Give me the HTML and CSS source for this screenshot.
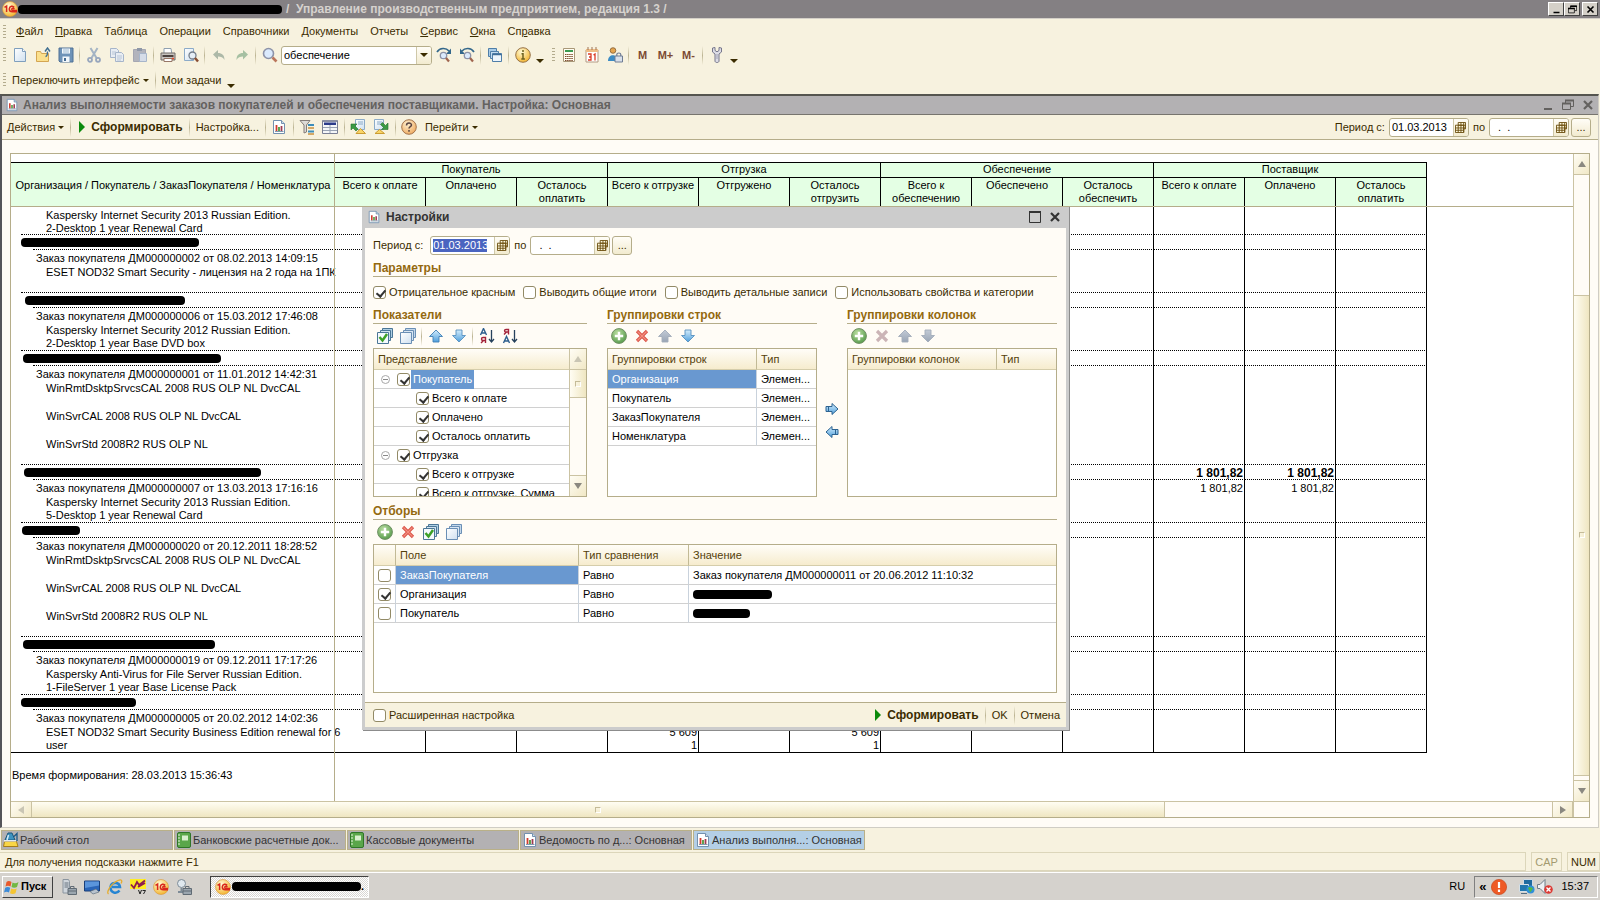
FILE: index.html
```html
<!DOCTYPE html>
<html lang="ru">
<head>
<meta charset="utf-8">
<title>Управление производственным предприятием</title>
<link rel="stylesheet" href="styles.css">
</head>
<body>
<svg class="defs" aria-hidden="true">
  <defs>
    <linearGradient id="gBlue" x1="0" y1="0" x2="0" y2="1"><stop offset="0" stop-color="#d4edfc"/><stop offset="1" stop-color="#4f9fdc"/></linearGradient>
    <linearGradient id="gGrey" x1="0" y1="0" x2="0" y2="1"><stop offset="0" stop-color="#c3cbd6"/><stop offset="1" stop-color="#99a5b5"/></linearGradient>
    <linearGradient id="gDoc" x1="0" y1="0" x2="1" y2="1"><stop offset="0" stop-color="#fff"/><stop offset="1" stop-color="#cfe0f0"/></linearGradient>
    <radialGradient id="gGreen" cx=".4" cy=".3" r=".8"><stop offset="0" stop-color="#b9dc9f"/><stop offset="1" stop-color="#4e9645"/></radialGradient>
    <radialGradient id="gOrange" cx=".4" cy=".3" r=".8"><stop offset="0" stop-color="#fff0cf"/><stop offset="1" stop-color="#eda456"/></radialGradient>
    <radialGradient id="gYellow" cx=".4" cy=".3" r=".8"><stop offset="0" stop-color="#fffbd8"/><stop offset="1" stop-color="#f2ad1c"/></radialGradient>
  </defs>
  <symbol id="one" viewBox="0 0 16 16"><circle cx="8" cy="8" r="7.5" fill="url(#gYellow)" stroke="#d8953a" stroke-width=".6"/><path d="M2.5 6.3 4.6 5v6M12.2 6.4C11 4.3 7.3 4.9 7.3 8c0 2.2 1.5 2.8 3 2.8H15M12.4 8.2c-1.200-1.400-2.600-.9-2.600.2 0 .8.6 1 1.200 1h4" fill="none" stroke="#d9281c" stroke-width="1.500"/></symbol>
  <symbol id="new" viewBox="0 0 16 16"><path d="M2.500 1.500h8l3 3v10h-11z" fill="url(#gDoc)" stroke="#7f9fbd"/><path d="M10.500 1.500v3h3" fill="#fff" stroke="#7f9fbd"/></symbol>
  <symbol id="open" viewBox="0 0 16 16"><path d="M1.500 14.500v-10h4l1 2h7v8z" fill="#fbe08d" stroke="#d3a552"/><path d="M10.500 9.500c2 0 2-2 2-5M10 4.500 12.500 1 15 4.500" fill="none" stroke="#3d6d8f" stroke-width="1.400"/></symbol>
  <symbol id="save" viewBox="0 0 16 16"><path d="M1 1h14v14H2l-1-1z" fill="#6e93b8" stroke="#4e7195"/><path d="M4 1.500h8v5H4zM4.500 9.500h7V15h-7z" fill="#f2f7fb"/><path d="M5 3h6M5 5h6" stroke="#9db9d1"/><path d="M6 11h2v3H6z" fill="#456a90"/></symbol>
  <symbol id="cut" viewBox="0 0 16 16"><path d="M4.500 1 10.500 11M11.500 1l-6 10" stroke="#a4b4c4" stroke-width="2"/><g fill="none" stroke="#97a6bd" stroke-width="1.800"><circle cx="4" cy="12.800" r="2"/><circle cx="12" cy="12.800" r="2"/></g></symbol>
  <symbol id="copy" viewBox="0 0 16 16"><g fill="#e8edf3" stroke="#a6b5ca"><path d="M1.500 1.500h6l2 2v7h-8z"/><path d="M6.500 5.500h6l2 2v7h-8z"/></g><path d="M3 5h4M8 9h5M8 11h5M8 13h4M3 7h3" stroke="#b8c5d6"/></symbol>
  <symbol id="paste" viewBox="0 0 16 16"><path d="M1.500 2.500h12v12h-12z" fill="#b2b4bd" stroke="#a5a7b2"/><path d="M5 1h5v3H5z" fill="#8f98a8"/><path d="M7.500 6.500h7v8h-7z" fill="#d5dce8" stroke="#a6b5ca"/></symbol>
  <symbol id="print" viewBox="0 0 16 16"><path d="M4 1.500h7l1 6H4z" fill="#fff" stroke="#8fa0b0"/><path d="M1 6h14v7H1z" fill="#c7c4c0" stroke="#706a66"/><path d="M2.500 8h11v2h-11z" fill="#4c4340"/><path d="M4 11.500h8v3H4z" fill="#fff" stroke="#977767"/><path d="M12 11.500h2" stroke="#e24a2c" stroke-width="1.500"/></symbol>
  <symbol id="preview" viewBox="0 0 16 16"><path d="M1.500 1.500h9v12h-9z" fill="url(#gDoc)" stroke="#8cabc8"/><circle cx="9.500" cy="8.500" r="3.500" fill="#e5eef6" stroke="#737d8a" stroke-width="1.300"/><path d="m12 11 3 3.500" stroke="#894e32" stroke-width="2.400"/></symbol>
  <symbol id="undo" viewBox="0 0 16 16"><path d="M2 7.500 7 3v3c4 0 6.500 2 6.500 7C12 10 10 9.500 7 9.500v3z" fill="#adb9a8"/></symbol>
  <symbol id="redo" viewBox="0 0 16 16"><path d="M14 7.500 9 3v3c-4 0-6.500 2-6.500 7C4 10 6 9.500 9 9.500v3z" fill="#a6c0a2"/></symbol>
  <symbol id="lens" viewBox="0 0 16 16"><circle cx="6.500" cy="6.500" r="5" fill="#dbeafd" stroke="#8d93a8" stroke-width="1.600"/><path d="m10.500 10.500 4 4" stroke="#bb765c" stroke-width="2.600"/></symbol>
  <symbol id="next" viewBox="0 0 16 16"><path d="M1 5c3-4.500 9-4.500 12-1" fill="none" stroke="#33678b" stroke-width="1.700"/><path d="M15 1.500V7h-5z" fill="#33678b"/><circle cx="7.500" cy="8.500" r="3.200" fill="#dbeafd" stroke="#8d93a8" stroke-width="1.300"/><path d="m10 11 3 3.500" stroke="#a0654f" stroke-width="2.200"/></symbol>
  <symbol id="prev" viewBox="0 0 16 16"><path d="M15 5C12 .5 6 .5 3 4" fill="none" stroke="#33678b" stroke-width="1.700"/><path d="M1 1.500V7h5z" fill="#33678b"/><circle cx="8.500" cy="8.500" r="3.200" fill="#dbeafd" stroke="#8d93a8" stroke-width="1.300"/><path d="m11 11 3 3.500" stroke="#a0654f" stroke-width="2.200"/></symbol>
  <symbol id="windows" viewBox="0 0 16 16"><g stroke="#4f7ea8"><path d="M1.500 1.500h8v8h-8z" fill="#a9cce8"/><path d="M3.500 4.500h8v7h-8z" fill="#c3dcf0"/><path d="M5.500 6.500h9v8h-9z" fill="#edf5fc"/></g><path d="M5.500 7.500h9" stroke="#3d6d98" stroke-width="1.500"/></symbol>
  <symbol id="info" viewBox="0 0 16 16"><circle cx="8" cy="8" r="7.300" fill="url(#gYellow)" stroke="#977349"/><path d="M8 3v2M6.500 6.800H8V12M6.300 12h3.600" fill="none" stroke="#6d611f" stroke-width="1.500"/></symbol>
  <symbol id="calc" viewBox="0 0 16 16"><path d="M2.500 1.500h11v13h-11z" fill="#fffdf2" stroke="#a99878"/><path d="M4 3h8v2H4z" fill="#3a9b52"/><path d="M4 7.500h8M4 9.500h8M4 11.500h8M4 13.500h8" stroke="#7c4a2c" stroke-width="1.200" stroke-dasharray="1.500 .6"/></symbol>
  <symbol id="cal" viewBox="0 0 16 16"><path d="M2 3h12v12H2z" fill="#fff" stroke="#b39a83"/><path d="M2 2h12v3H2z" fill="#efbd85"/><path d="M4 0v3M8 0v3M12 0v3" stroke="#9d7254"/><path d="M4 7h3v6H4M5 10h2M9.500 8 11 7v6.500" fill="none" stroke="#da3b24" stroke-width="1.300"/></symbol>
  <symbol id="userlock" viewBox="0 0 16 16"><circle cx="6" cy="3.500" r="2.800" fill="#e4a54f" stroke="#805a2f" stroke-width=".8"/><path d="M1 14c0-7 9-8 10 0z" fill="#3c8cc4"/><path d="M8 9h7.500v6H8z" fill="#d9e0ea" stroke="#6e7c94"/><path d="M9.800 9V7.500c0-2 4-2 4 0V9" fill="none" stroke="#6e7c94" stroke-width="1.200"/></symbol>
  <symbol id="wrench" viewBox="0 0 16 16"><path d="M3.500 1v4l2.500 2v7c0 2 4 2 4 0V7l2.500-2V1L10 .500v3L8 4.800 6 3.500v-3z" fill="#dddde6" stroke="#77778b"/><path d="M8 7v5" stroke="#a3a3b5"/></symbol>
  <symbol id="report" viewBox="0 0 14 16"><path d="M1.500 1.500h8l3 3v10h-11z" fill="#fff" stroke="#7391af"/><path d="M9.500 1.500v3h3" fill="#cdddec" stroke="#7391af"/><path d="M4.500 6v6" stroke="#d23b2e" stroke-width="1.800"/><path d="M7 8v4" stroke="#4c9b3e" stroke-width="1.800"/><path d="M9.500 7v5" stroke="#a03b50" stroke-width="1.800"/><path d="M3 12.500h8.500" stroke="#8099b0"/></symbol>
  <symbol id="filter" viewBox="0 0 16 16"><path d="M1 1.500h10L7.500 6v7L5 14V6z" fill="#dddad7" stroke="#857d79"/><path d="M9 6h6M9 12.500h6" stroke="#3c8dbb" stroke-width="2"/><path d="M9 9h6M9 15h6" stroke="#d5a865" stroke-width="2"/></symbol>
  <symbol id="form" viewBox="0 0 16 16"><path d="M.5 1.500h15v13H.5z" fill="#f4f6f8" stroke="#7a7f94"/><path d="M1 1h14v2H1z" fill="#8b90a3"/><path d="M2 3.500h12v2.500H2z" fill="#2c3b8a"/><path d="M1 8.500h14M1 11.500h14M8 6v8" stroke="#98a2b3"/></symbol>
  <symbol id="expin" viewBox="0 0 16 16"><path d="M5.500.5h9v10h-9z" fill="url(#gDoc)" stroke="#8cabc8"/><path d="M8 3h5M8 5h5" stroke="#8cabc8"/><path d="M1 11V5h6L5 7l3 3-2 2-3-3z" fill="#3b9a43" stroke="#27712e" stroke-width=".6"/><path d="m6 14.500 4.500-5 5 5z" fill="#f9d567" stroke="#cb9b32"/></symbol>
  <symbol id="expout" viewBox="0 0 16 16"><path d="M1.500.5h9v10h-9z" fill="url(#gDoc)" stroke="#8cabc8"/><path d="M4 3h5M4 5h4" stroke="#8cabc8"/><path d="M15 4v6.500H8.500l2-2-3-3 2-2 3 3z" fill="#3b9a43" stroke="#27712e" stroke-width=".6"/><path d="m2 14.500 4.500-4 5 4z" fill="#f9d567" stroke="#cb9b32"/></symbol>
  <symbol id="help" viewBox="0 0 16 16"><circle cx="8" cy="8" r="7.300" fill="url(#gOrange)" stroke="#a5744c"/><path d="M5.500 6.500C5.500 3.300 10.500 3.500 10.500 6c0 1.700-2.500 1.700-2.500 3.500M8 11v1.800" fill="none" stroke="#5a4542" stroke-width="1.500"/></symbol>
  <symbol id="grid" viewBox="0 0 12 12"><path d="M4 1h7v7H9v3H1V4h3z" fill="#fffbe0"/><path d="M3.500.500h8v7h-2M.500 3.500h9v8h-9zM3.500.500v11M6.500.500v11M9.500.500v11M.500 6.500h11M.500 9H9M3.500 3.500h8" fill="none" stroke="#6a4d0c"/></symbol>
  <symbol id="checkall" viewBox="0 0 16 16"><g stroke="#4b7696"><path d="M5.500.500h10v9h-10z" fill="#afcfe4"/><path d="M3.500 2.500h10v10h-10z" fill="#cfe2ef"/><path d="M.500 4.500h11v11H.500z" fill="#f4f9fd"/></g><path d="m2.500 9 3 3.500L10 6" fill="none" stroke="#3da027" stroke-width="2.500"/></symbol>
  <symbol id="uncheck" viewBox="0 0 16 16"><g stroke="#6a8fb5"><path d="M5.500.500h10v9h-10z" fill="#c3d7ea"/><path d="M3.500 2.500h10v10h-10z" fill="#d9e6f3"/><path d="M.500 4.500h11v11H.500z" fill="url(#gDoc)"/></g></symbol>
  <symbol id="up" viewBox="0 0 16 16"><path d="m8 2 6.500 6.500H11V14H5V8.500H1.500z" fill="url(#gBlue)" stroke="#3f7fb5" stroke-width=".9"/></symbol>
  <symbol id="down" viewBox="0 0 16 16"><path d="m8 14 6.500-6.500H11V2H5v5.500H1.500z" fill="url(#gBlue)" stroke="#5791bf" stroke-width=".9"/></symbol>
  <symbol id="upoff" viewBox="0 0 16 16"><path d="m8 2 6.500 6.500H11V14H5V8.500H1.500z" fill="url(#gGrey)" stroke="#a3adba" stroke-width=".9"/></symbol>
  <symbol id="downoff" viewBox="0 0 16 16"><path d="m8 14 6.500-6.500H11V2H5v5.500H1.500z" fill="url(#gGrey)" stroke="#a3adba" stroke-width=".9"/></symbol>
  <symbol id="right" viewBox="0 0 14 14"><path d="M1 4.500h6V1.500L13 7l-6 5.500v-3H1z" fill="url(#gBlue)" stroke="#2d6391"/><path d="M3.500 5v4" stroke="#2d6391"/></symbol>
  <symbol id="left" viewBox="0 0 14 14"><path d="M13 4.500H7V1.500L1 7l6 5.500v-3h6z" fill="url(#gBlue)" stroke="#2d6391"/><path d="M10.500 5v4" stroke="#2d6391"/></symbol>
  <symbol id="add" viewBox="0 0 16 16"><circle cx="8" cy="8" r="7.400" fill="url(#gGreen)" stroke="#6f8f63"/><path d="M8 3.800v8.400M3.800 8h8.400" stroke="#fff" stroke-width="2.400"/></symbol>
  <symbol id="del" viewBox="0 0 16 16"><path d="m3 3 10 10M13 3 3 13" stroke="#da5348" stroke-width="3.200"/><path d="m3.500 3.500 9 9M12.500 3.500l-9 9" stroke="#f38d7d" stroke-width="1.200"/></symbol>
  <symbol id="deloff" viewBox="0 0 16 16"><path d="m3 3 10 10M13 3 3 13" stroke="#cbb4b6" stroke-width="3.200"/></symbol>
  <symbol id="azdown" viewBox="0 0 16 16"><path d="M1.500 7 4.500.500 7.500 7M2.500 5h4" fill="none" stroke="#2d5e8d" stroke-width="1.400"/><path d="M6.500 15V9.500H4c-2 0-2 3 0 3h2.500M4.500 12.500 2 15" fill="none" stroke="#a3243a" stroke-width="1.400"/><path d="M12.500 2v11M10 11l2.500 3 2.500-3" fill="none" stroke="#26415c" stroke-width="1.300"/></symbol>
  <symbol id="zadown" viewBox="0 0 16 16"><path d="M6.500 6.500V1.500H4c-2 0-2 2.500 0 2.500h2.500M4.500 4 2 6.500" fill="none" stroke="#a3243a" stroke-width="1.400"/><path d="m1.500 15 3-6.500 3 6.500M2.500 13h4" fill="none" stroke="#2d5e8d" stroke-width="1.400"/><path d="M12.500 2v11M10 11l2.500 3 2.500-3" fill="none" stroke="#26415c" stroke-width="1.300"/></symbol>
  <symbol id="min" viewBox="0 0 12 12"><path d="M2 10h8" stroke="currentColor" stroke-width="2"/></symbol>
  <symbol id="restore" viewBox="0 0 12 12"><path d="M3.500 4V1.500h8v6H9M.500 4.500h8v6h-8z" fill="none" stroke="currentColor"/><path d="M3 1.500h9M0 4.500h9" stroke="currentColor" stroke-width="2"/></symbol>
  <symbol id="max" viewBox="0 0 12 12"><path d="M.500 1h11v10.500H.500z" fill="none" stroke="currentColor"/><path d="M0 1h12" stroke="currentColor" stroke-width="2"/></symbol>
  <symbol id="close" viewBox="0 0 12 12"><path d="m2 2 8 8M10 2l-8 8" stroke="currentColor" stroke-width="2.200"/></symbol>
  <symbol id="desk" viewBox="0 0 16 16"><path d="M5 1h4l3 7H2z" fill="#3e93c0" stroke="#1a567c"/><path d="M5.500 3 4 8" stroke="#d6ecf8" stroke-width="1.500"/><path d="M1.500 9.500h12l1.500 5H.500z" fill="#f9d645" stroke="#a57d1b"/><path d="M1 8.800h12" stroke="#e8f1f8" stroke-width="1.500"/><path d="M11 4.500 14 1.500V9" fill="none" stroke="#1b5887" stroke-width="1.300"/></symbol>
  <symbol id="book" viewBox="0 0 14 16"><rect x=".500" y=".500" width="13" height="15" rx="1.500" fill="#5aa64a" stroke="#2f7528"/><path d="M5 3.500h6v5H5z" fill="#d8efcd"/><path d="M1 3h2M1 6h2M1 9h2M1 12h2" stroke="#e8f5e2"/></symbol>
  <symbol id="flag" viewBox="0 0 16 16"><path d="M2.500 3C4 1.500 6 2 7.500 3L6.500 7.500C5 6.500 3 6.500 1.500 7.500z" fill="#e8592b"/><path d="M8.500 3.500c1.500 1 4 1 6-.5l-1.500 5c-1.500 1-4 1-5.500 0z" fill="#72b843"/><path d="M1.200 8.800c1.500-1 3.500-1 5 0L5 13.500c-1.500-1-3.500-1-5 0z" fill="#3c8bd8"/><path d="M7.200 9.500c1.500 1 4 1 5.500 0l-1.200 4.700c-1.500 1-4 1-5.500 0z" fill="#f5c532"/></symbol>
  <symbol id="server" viewBox="0 0 16 16"><path d="M2 .500h5.500l1 2V14H2z" fill="#cfd5db" stroke="#8a959f"/><path d="M3.500 4h4M3.500 6h4M3.500 8h4" stroke="#66727e"/><path d="M7 9.500h8.500v6H7z" fill="#9ba6af" stroke="#606b74"/><path d="M9.500 9V7.500h3.500V9M7 12h8.500" fill="none" stroke="#606b74"/></symbol>
  <symbol id="screen" viewBox="0 0 16 16"><path d="M.500 2h15v10H.500z" fill="#2a65b8" stroke="#1b3f78"/><path d="M1 2.500h14v4L1 9z" fill="#5b95dc"/><path d="M6 12.500 12 10l3 3-6 2z" fill="#b9c3ce" stroke="#60707f" stroke-width=".7"/></symbol>
  <symbol id="ie" viewBox="0 0 16 16"><path d="M12.500 11.500C9 16 3 13 3.500 8c.5-5.500 9-5.500 9.500 0H5" fill="none" stroke="#2685d2" stroke-width="2.500"/><path d="M1.500 15C-1 13 4 4.500 11 1.500c4-1.500 4.500.5 3 3" fill="none" stroke="#e7ad2c" stroke-width="1.300"/></symbol>
  <symbol id="v7" viewBox="0 0 16 16"><path d="M0 0h16v10H0z" fill="#ffed23"/><path d="M1 5.500 4 9l3-6 2 3 6-4.500M8 8l7-4" fill="none" stroke="#8f1c4e" stroke-width="1.800"/><path d="m8.500 11 1.500 4 1.500-4M12.500 11.500h3L13.500 15" fill="none" stroke="#222"/></symbol>
  <symbol id="tool" viewBox="0 0 16 16"><circle cx="5.500" cy="4.500" r="4" fill="#dfe8ee" stroke="#7d8b97"/><path d="M5.500 9v4M2 13h6" stroke="#7d8b97" stroke-width="2"/><path d="M7 9.500h8.500v6H7z" fill="#9ba6af" stroke="#606b74"/><path d="M9.500 9V7.500h3.500V9M7 12h8.500" fill="none" stroke="#606b74"/></symbol>
  <symbol id="alert" viewBox="0 0 16 16"><circle cx="8" cy="8" r="7.600" fill="#ee5a25" stroke="#c8481c" stroke-width=".7"/><path d="M8 3v6M8 10.500V13" stroke="#fff" stroke-width="2.200"/></symbol>
  <symbol id="net" viewBox="0 0 16 16"><path d="M4.500.500h9v7h-9z" fill="#1f6a9f" stroke="#cfdbe5"/><path d="M.500 5.500h9v7h-9z" fill="#2377ad" stroke="#d5e0e8"/><path d="M2 14.500h6" stroke="#536d82"/><circle cx="11.500" cy="10.500" r="4" fill="#2f8fd8"/><path d="M9 9c2-2 3 0 5 0-1 2-2 4-3 4z" fill="#52b847"/></symbol>
  <symbol id="mute" viewBox="0 0 16 16"><path d="M.500 5.500H3l5-5v14l-5-5H.500z" fill="#eef1f4" stroke="#6f7c88"/><circle cx="11.500" cy="10.500" r="4.300" fill="#dc3a34"/><path d="m9.500 8.500 4 4M13.500 8.500l-4 4" stroke="#fff" stroke-width="1.400"/></symbol>
</svg>

<header class="titlebar">
  <svg class="ico"><use href="#one"/></svg>
  <span class="redact title-redact"></span>
  <h1 class="title-text">/&nbsp; Управление производственным предприятием, редакция 1.3 /</h1>
  <span class="winbtns">
    <button class="winbtn" aria-label="Свернуть"><svg><use href="#min"/></svg></button>
    <button class="winbtn" aria-label="Восстановить"><svg><use href="#restore"/></svg></button>
    <button class="winbtn apart" aria-label="Закрыть"><svg><use href="#close"/></svg></button>
  </span>
</header>

<nav class="menubar">
  <i class="grip"></i>
  <button class="menu"><u>Ф</u>айл</button><button class="menu"><u>П</u>равка</button><button class="menu">Таблица</button><button class="menu">Операции</button><button class="menu">Справочники</button><button class="menu">Документы</button><button class="menu">Отчеты</button><button class="menu"><u>С</u>ервис</button><button class="menu"><u>О</u>кна</button><button class="menu">Сп<u>р</u>авка</button>
</nav>

<div class="toolbar">
  <i class="grip"></i>
  <button class="tb" aria-label="Создать"><svg class="ico"><use href="#new"/></svg></button>
  <button class="tb" aria-label="Открыть"><svg class="ico"><use href="#open"/></svg></button>
  <button class="tb" aria-label="Сохранить"><svg class="ico"><use href="#save"/></svg></button>
  <i class="sep"></i>
  <button class="tb" aria-label="Вырезать"><svg class="ico"><use href="#cut"/></svg></button>
  <button class="tb" aria-label="Копировать"><svg class="ico"><use href="#copy"/></svg></button>
  <button class="tb" aria-label="Вставить"><svg class="ico"><use href="#paste"/></svg></button>
  <i class="sep"></i>
  <button class="tb" aria-label="Печать"><svg class="ico"><use href="#print"/></svg></button>
  <button class="tb" aria-label="Просмотр"><svg class="ico"><use href="#preview"/></svg></button>
  <i class="sep"></i>
  <button class="tb" aria-label="Отменить"><svg class="ico"><use href="#undo"/></svg></button>
  <button class="tb" aria-label="Вернуть"><svg class="ico"><use href="#redo"/></svg></button>
  <i class="sep"></i>
  <button class="tb" aria-label="Найти"><svg class="ico"><use href="#lens"/></svg></button>
  <span class="field search"><input type="text" value="обеспечение" aria-label="Поиск"><button class="fieldbtn" aria-label="История поиска"><i class="caret"></i></button></span>
  <button class="tb" aria-label="Найти следующий"><svg class="ico"><use href="#next"/></svg></button>
  <button class="tb" aria-label="Найти предыдущий"><svg class="ico"><use href="#prev"/></svg></button>
  <i class="sep"></i>
  <button class="tb" aria-label="Окна"><svg class="ico"><use href="#windows"/></svg></button>
  <i class="sep"></i>
  <button class="tb" aria-label="Информация"><svg class="ico"><use href="#info"/></svg></button>
  <button class="more" aria-label="Еще"><i class="caret"></i></button>
  <i class="grip"></i>
  <button class="tb" aria-label="Калькулятор"><svg class="ico"><use href="#calc"/></svg></button>
  <button class="tb" aria-label="Календарь"><svg class="ico"><use href="#cal"/></svg></button>
  <button class="tb" aria-label="Пользователи"><svg class="ico"><use href="#userlock"/></svg></button>
  <i class="sep"></i>
  <button class="tb mem">M</button><button class="tb mem">M+</button><button class="tb mem">M-</button>
  <i class="sep"></i>
  <button class="tb" aria-label="Параметры"><svg class="ico"><use href="#wrench"/></svg></button>
  <button class="more" aria-label="Еще"><i class="caret"></i></button>
</div>

<div class="toolbar second">
  <i class="grip"></i>
  <button class="cmd">Переключить интерфейс<i class="caret small"></i></button>
  <i class="sep"></i>
  <button class="cmd">Мои задачи</button>
  <button class="more" aria-label="Еще"><i class="caret"></i></button>
</div>

<main class="child">
  <div class="child-title">
    <svg class="ico doc"><use href="#report"/></svg>
    <h2>Анализ выполняемости заказов покупателей и обеспечения поставщиками. Настройка: Основная</h2>
    <span class="child-btns">
      <button aria-label="Свернуть"><svg><use href="#min"/></svg></button>
      <button aria-label="Восстановить"><svg><use href="#restore"/></svg></button>
      <button aria-label="Закрыть"><svg><use href="#close"/></svg></button>
    </span>
  </div>
  <div class="child-tools">
    <button class="cmd">Действия<i class="caret small"></i></button>
    <i class="sep"></i>
    <button class="cmd run"><i class="play"></i>Сформировать</button>
    <i class="sep"></i>
    <button class="cmd">Настройка...</button>
    <i class="sep"></i>
    <button class="tb" aria-label="Отчет"><svg class="ico"><use href="#report"/></svg></button>
    <i class="sep"></i>
    <button class="tb" aria-label="Отбор"><svg class="ico"><use href="#filter"/></svg></button>
    <button class="tb" aria-label="Форма"><svg class="ico"><use href="#form"/></svg></button>
    <i class="sep"></i>
    <button class="tb" aria-label="Загрузить"><svg class="ico"><use href="#expin"/></svg></button>
    <button class="tb" aria-label="Выгрузить"><svg class="ico"><use href="#expout"/></svg></button>
    <i class="sep"></i>
    <button class="tb" aria-label="Справка"><svg class="ico"><use href="#help"/></svg></button>
    <button class="cmd">Перейти<i class="caret small"></i></button>
    <span class="period push">
      <label for="from">Период с:</label>
      <span class="field date"><input id="from" type="text" value="01.03.2013"><button class="fieldbtn" aria-label="Календарь"><svg><use href="#grid"/></svg></button></span>
      <label for="to">по</label>
      <span class="field date"><input id="to" type="text" value="  .  ."><button class="fieldbtn" aria-label="Календарь"><svg><use href="#grid"/></svg></button></span>
      <button class="dots">...</button>
    </span>
  </div>

  <div class="child-body">
    <div class="sheet">
      <div class="view">
        <table class="report">
          <thead>
            <tr class="h1">
              <th rowspan="2" class="first">Организация / Покупатель / ЗаказПокупателя / Номенклатура</th>
              <th colspan="3">Покупатель</th><th colspan="3">Отгрузка</th><th colspan="3">Обеспечение</th><th colspan="3">Поставщик</th>
            </tr>
            <tr class="h2">
              <th>Всего к оплате</th><th>Оплачено</th><th>Осталось<br>оплатить</th>
              <th>Всего к отгрузке</th><th>Отгружено</th><th>Осталось<br>отгрузить</th>
              <th>Всего к<br>обеспечению</th><th>Обеспечено</th><th>Осталось<br>обеспечить</th>
              <th>Всего к оплате</th><th>Оплачено</th><th>Осталось<br>оплатить</th>
            </tr>
          </thead>
          <tbody id="rows"></tbody>
        </table>
        <p class="stamp">Время формирования: 28.03.2013 15:36:43</p>
      </div>
      <div class="vscroll">
        <button class="arrow" aria-label="Вверх"><i class="tri up"></i></button>
        <span class="track"></span><span class="thumb"></span><span class="gap"></span>
        <button class="arrow" aria-label="Вниз"><i class="tri down"></i></button>
      </div>
      <div class="hscroll">
        <button class="arrow" aria-label="Влево"><i class="tri left"></i></button>
        <span class="thumb"></span><span class="track"></span>
        <button class="arrow" aria-label="Вправо"><i class="tri right"></i></button>
      </div>
      <div class="corner"></div>
    </div>
  </div>
</main>

<nav class="tabs">
  <button class="tab"><svg class="ico"><use href="#desk"/></svg>Рабочий стол</button>
  <button class="tab"><svg class="ico"><use href="#book"/></svg>Банковские расчетные док...</button>
  <button class="tab"><svg class="ico"><use href="#book"/></svg>Кассовые документы</button>
  <button class="tab"><svg class="ico"><use href="#report"/></svg>Ведомость по д...: Основная</button>
  <button class="tab active"><svg class="ico"><use href="#report"/></svg>Анализ выполня...: Основная</button>
</nav>

<footer class="status">
  <span class="hint">Для получения подсказки нажмите F1</span>
  <span class="lamp off">CAP</span>
  <span class="lamp">NUM</span>
</footer>

<div class="taskbar">
  <button class="start"><svg class="ico"><use href="#flag"/></svg>Пуск</button>
  <span class="quick">
    <svg class="ico"><use href="#server"/></svg><svg class="ico"><use href="#screen"/></svg><svg class="ico"><use href="#ie"/></svg><svg class="ico"><use href="#v7"/></svg><svg class="ico"><use href="#one"/></svg><svg class="ico"><use href="#tool"/></svg>
  </span>
  <button class="task"><svg class="ico"><use href="#one"/></svg><span class="redact"></span>.</button>
  <span class="lang">RU</span>
  <span class="tray"><b>«</b><svg class="ico"><use href="#alert"/></svg><svg class="ico net"><use href="#net"/></svg><svg class="ico"><use href="#mute"/></svg><time>15:37</time></span>
</div>

<section class="dialog" role="dialog" aria-labelledby="dlg">
  <div class="dlg-title">
    <svg class="ico doc"><use href="#report"/></svg>
    <h2 id="dlg">Настройки</h2>
    <span class="child-btns">
      <button aria-label="Развернуть"><svg><use href="#max"/></svg></button>
      <button aria-label="Закрыть"><svg><use href="#close"/></svg></button>
    </span>
  </div>
  <div class="dlg-body">
    <div class="period">
      <label for="dfrom">Период с:</label>
      <span class="field date"><input id="dfrom" class="selected" type="text" value="01.03.2013"><button class="fieldbtn" aria-label="Календарь"><svg><use href="#grid"/></svg></button></span>
      <label for="dto">по</label>
      <span class="field date"><input id="dto" type="text" value="  .  ."><button class="fieldbtn" aria-label="Календарь"><svg><use href="#grid"/></svg></button></span>
      <button class="dots">...</button>
    </div>
    <h3>Параметры</h3>
    <div class="checks">
      <label class="chk"><input type="checkbox" checked>Отрицательное красным</label>
      <label class="chk"><input type="checkbox">Выводить общие итоги</label>
      <label class="chk"><input type="checkbox">Выводить детальные записи</label>
      <label class="chk"><input type="checkbox">Использовать свойства и категории</label>
    </div>
    <div class="columns">
      <div class="col">
        <h3>Показатели</h3>
        <div class="tools">
          <button class="tb" aria-label="Отметить все"><svg class="ico"><use href="#checkall"/></svg></button>
          <button class="tb" aria-label="Снять отметки"><svg class="ico"><use href="#uncheck"/></svg></button>
          <i class="sep"></i>
          <button class="tb" aria-label="Вверх"><svg class="ico"><use href="#up"/></svg></button>
          <button class="tb" aria-label="Вниз"><svg class="ico"><use href="#down"/></svg></button>
          <i class="sep"></i>
          <button class="tb" aria-label="По возрастанию"><svg class="ico"><use href="#azdown"/></svg></button>
          <button class="tb" aria-label="По убыванию"><svg class="ico"><use href="#zadown"/></svg></button>
        </div>
        <div class="box split">
          <div class="tree">
            <div class="head">Представление</div>
            <div class="node cur"><i class="minus"></i><label class="chk"><input type="checkbox" checked><span>Покупатель</span></label></div>
            <div class="node sub"><label class="chk"><input type="checkbox" checked>Всего к оплате</label></div>
            <div class="node sub"><label class="chk"><input type="checkbox" checked>Оплачено</label></div>
            <div class="node sub"><label class="chk"><input type="checkbox" checked>Осталось оплатить</label></div>
            <div class="node"><i class="minus"></i><label class="chk"><input type="checkbox" checked>Отгрузка</label></div>
            <div class="node sub"><label class="chk"><input type="checkbox" checked>Всего к отгрузке</label></div>
            <div class="node sub"><label class="chk"><input type="checkbox" checked>Всего к отгрузке, Сумма</label></div>
          </div>
          <div class="vscroll">
            <button class="arrow" aria-label="Вверх"><i class="tri up dim"></i></button>
            <span class="thumb short"></span><span class="track"></span>
            <button class="arrow" aria-label="Вниз"><i class="tri down"></i></button>
          </div>
        </div>
      </div>
      <div class="col rowset">
        <h3>Группировки строк</h3>
        <div class="tools">
          <button class="tb" aria-label="Добавить"><svg class="ico"><use href="#add"/></svg></button>
          <button class="tb" aria-label="Удалить"><svg class="ico"><use href="#del"/></svg></button>
          <button class="tb" aria-label="Вверх" disabled><svg class="ico"><use href="#upoff"/></svg></button>
          <button class="tb" aria-label="Вниз"><svg class="ico"><use href="#down"/></svg></button>
        </div>
        <div class="box">
          <table class="list">
            <thead><tr><th>Группировки строк</th><th class="kind">Тип</th></tr></thead>
            <tbody>
              <tr class="cur"><td>Организация</td><td>Элемен...</td></tr>
              <tr><td>Покупатель</td><td>Элемен...</td></tr>
              <tr><td>ЗаказПокупателя</td><td>Элемен...</td></tr>
              <tr><td>Номенклатура</td><td>Элемен...</td></tr>
            </tbody>
          </table>
        </div>
      </div>
      <div class="swap">
        <button class="tb" aria-label="Перенести в колонки"><svg><use href="#right"/></svg></button>
        <button class="tb" aria-label="Перенести в строки"><svg><use href="#left"/></svg></button>
      </div>
      <div class="col">
        <h3>Группировки колонок</h3>
        <div class="tools">
          <button class="tb" aria-label="Добавить"><svg class="ico"><use href="#add"/></svg></button>
          <button class="tb" aria-label="Удалить" disabled><svg class="ico"><use href="#deloff"/></svg></button>
          <button class="tb" aria-label="Вверх" disabled><svg class="ico"><use href="#upoff"/></svg></button>
          <button class="tb" aria-label="Вниз" disabled><svg class="ico"><use href="#downoff"/></svg></button>
        </div>
        <div class="box">
          <table class="list">
            <thead><tr><th>Группировки колонок</th><th class="kind">Тип</th></tr></thead>
          </table>
        </div>
      </div>
    </div>
    <h3 class="last">Отборы</h3>
    <div class="tools">
      <button class="tb" aria-label="Добавить"><svg class="ico"><use href="#add"/></svg></button>
      <button class="tb" aria-label="Удалить"><svg class="ico"><use href="#del"/></svg></button>
      <button class="tb" aria-label="Отметить все"><svg class="ico"><use href="#checkall"/></svg></button>
      <button class="tb" aria-label="Снять отметки"><svg class="ico"><use href="#uncheck"/></svg></button>
    </div>
    <div class="box">
      <table class="list filters">
        <thead><tr><th class="mark"></th><th class="name">Поле</th><th class="cmp">Тип сравнения</th><th>Значение</th></tr></thead>
        <tbody>
          <tr class="cur"><td class="mark"><input type="checkbox" aria-label="ЗаказПокупателя"></td><td>ЗаказПокупателя</td><td>Равно</td><td>Заказ покупателя ДМ000000011 от 20.06.2012 11:10:32</td></tr>
          <tr><td class="mark"><input type="checkbox" aria-label="Организация" checked></td><td>Организация</td><td>Равно</td><td><span class="redact" style="width:79px"></span></td></tr>
          <tr><td class="mark"><input type="checkbox" aria-label="Покупатель"></td><td>Покупатель</td><td>Равно</td><td><span class="redact" style="width:57px"></span></td></tr>
        </tbody>
      </table>
    </div>
  </div>
  <div class="dlg-foot">
    <label class="chk"><input type="checkbox">Расширенная настройка</label>
    <button class="cmd run push"><i class="play"></i>Сформировать</button>
    <i class="sep"></i>
    <button class="cmd">OK</button>
    <i class="sep"></i>
    <button class="cmd">Отмена</button>
  </div>
</section>
<script src="report.js"></script>
</body>
</html>
```

FILE: styles.css
```css
* { box-sizing: border-box; }
html, body { height: 100%; }
body {
  margin: 0;
  display: flex;
  flex-direction: column;
  overflow: hidden;
  background: #f7f2df;
  color: #3b2c00;
  font: 11px/13px "Liberation Sans", Arial, sans-serif;
}
h1, h2, h3, p { margin: 0; font-size: 11px; line-height: 13px; }
button, input { font: inherit; color: inherit; }
button { padding: 0; border: 0; background: none; white-space: nowrap; }
svg { display: block; width: 12px; height: 12px; }
.defs { position: absolute; width: 0; height: 0; }
.ico { width: 16px; height: 16px; flex: none; }
.ico.doc { width: 14px; height: 14px; }
.push { margin-left: auto; }
.redact { display: block; height: 9px; border-radius: 4px; background: #000; }

.titlebar {
  display: flex; align-items: center; flex: none;
  height: 19px; padding: 0 2px;
  background: #848083; color: #d6d2ce;
  border-bottom: 1px solid #d4d0c8;
}
.title-redact { width: 264px; }
.title-text { margin-left: 4px; font-size: 12px; }
.winbtns { display: flex; margin-left: auto; }
.winbtn {
  display: grid; place-items: center; width: 16px; height: 14px;
  background: #d4d0c8; color: #000;
  border: 1px solid; border-color: #fff #404040 #404040 #fff;
}
.winbtn svg { width: 9px; height: 9px; }
.apart { margin-left: 2px; }

.grip {
  width: 3px; height: 14px; flex: none; margin: 0 2px 0 3px;
  background: repeating-linear-gradient(#b3ab8d 0 1px, transparent 1px 3px);
}
.menubar { display: flex; align-items: center; flex: none; height: 25px; padding-left: 2px; }
.menubar .grip { margin-left: 1px; }
.menu { padding: 0 6px; }
.menu:first-of-type { padding-left: 8px; }
.toolbar { display: flex; align-items: center; flex: none; height: 22px; }
.toolbar.second { height: 28px; }
.tb { display: grid; place-items: center; width: 23px; height: 20px; flex: none; }
.mem { font-weight: bold; color: #7c4a33; }
.sep {
  width: 1px; height: 19px; flex: none; margin: 0 2px;
  background: linear-gradient(transparent, #bdb594 50%, transparent);
}
.caret { display: inline-block; border: 4px solid transparent; border-top-color: #3b2c00; border-bottom: 0; }
.caret.small { border-width: 3px; border-bottom: 0; margin-left: 3px; vertical-align: 2px; }
.more { display: flex; align-items: flex-end; width: 15px; height: 16px; padding-left: 2px; flex: none; }
.cmd { padding: 0 4px; }
.run { display: flex; align-items: center; font-weight: bold; font-size: 12px; }
.play { margin: 0 6px 0 2px; border: 6px solid transparent; border-left-color: #0b8a0b; border-right: 0; }

.field {
  display: flex; width: 80px; height: 19px; flex: none; overflow: hidden;
  background: #fff; border: 1px solid #b5ad8a; border-radius: 3px;
}
.field input { flex: 1; min-width: 0; padding: 0 2px; border: 0; background: none; color: #000; outline: 0; white-space: pre; }
.fieldbtn { display: grid; place-items: center; width: 15px; flex: none; background: linear-gradient(#fffdf7, #f2ebcf); border-left: 1px solid #cfc8a9; }
.field.search { width: 151px; }
.field .selected { background: linear-gradient(#4a64c0, #4a64c0) 2px 2px / 54px 13px no-repeat; color: #fff; }
.fieldbtn svg { width: 11px; height: 11px; }
.dots { width: 20px; height: 19px; border: 1px solid #b5ad8a; border-radius: 3px; background: linear-gradient(#fffdf7, #f2ebcf); }
.period { display: flex; align-items: center; }
.period label { margin: 0 4px; }
.period .dots { margin-left: 2px; }

.child {
  display: flex; flex-direction: column; flex: 1; min-height: 0;
  margin-right: 1px; background: #fffcf6;
  border: 1px solid #d0cdc4; border-top: 2px solid #55554f; border-left: 2px solid #55555a;
}
.child-title { display: flex; align-items: center; height: 19px; flex: none; padding: 0 4px 0 3px; background: #b3b1b3; color: #63615f; border-bottom: 1px solid #77756e; }
.child-title h2 { margin-left: 4px; font-size: 12px; }
.child-btns { display: flex; gap: 8px; margin-left: auto; }
.child-tools { display: flex; align-items: center; height: 25px; flex: none; padding: 0 7px 0 1px; background: #f7f2df; border-bottom: 1px solid #b5ad8a; }
.child-body { display: flex; flex: 1; min-height: 0; padding: 13px 8px 9px; }
.sheet {
  flex: 1; min-width: 0; display: grid;
  grid-template-columns: 1fr 16px; grid-template-rows: minmax(0, 1fr) 16px;
  border: 1px solid #b5ad8a;
}
.view { position: relative; min-width: 0; overflow: hidden; background: #fff; color: #000; }
.view::before, .view::after { content: ""; position: absolute; background: #b5ad8a; z-index: 1; }
.view::before { left: 323px; top: 0; bottom: 0; width: 1px; }
.view::after { left: 0; right: 0; top: 52px; height: 1px; }
.report { width: 1416px; margin-top: 8px; table-layout: fixed; border-spacing: 0; }
.report th, .report td { padding: 0; vertical-align: top; }
.report th { background: #e4ffe4; font-weight: normal; border-right: 1px solid #000; }
.report .first { width: 324px; vertical-align: middle; white-space: nowrap; border-top: 1px solid #000; border-right: 0; }
.h1 th { height: 16px; border-top: 1px solid #000; border-bottom: 1px solid #000; }
.h1 .first { border-bottom: 0; }
.h2 th { height: 29px; padding: 1px 0 0; white-space: nowrap; }
.report td + td { border-right: 1px solid #000; padding: 2px 1px 0; text-align: right; }
.org td, .order td { height: 15px; line-height: 12px; }
.item td { height: 28px; }
.cut td { height: 27px; }
.org td + td, .order td + td { border-top: 1px dotted #000; }
.label { white-space: nowrap; }
.org .label { height: 15px; margin-left: 10px; border-top: 1px dotted #000; }
.order .label { height: 15px; margin-left: 22px; padding: 2px 0 0 3px; border-top: 1px dotted #000; }
.item .label { height: 28px; margin-left: 35px; padding-top: 2px; }
.cut .label { height: 27px; }
.org td + td { font-weight: bold; font-size: 12px; }
.report tr:last-child td { height: 29px; border-bottom: 1px solid #000; }
.org .redact { margin-top: 3px; }
.stamp { padding: 16px 1px; }

.vscroll { display: flex; flex-direction: column; border-left: 1px solid #cbc3a3; background: #fffcf6; }
.hscroll { display: flex; border-top: 1px solid #cbc3a3; background: #fffcf6; }
.arrow { display: grid; place-items: center; flex: none; background: linear-gradient(135deg, #fffdf5, #f1e8c6); }
.vscroll .arrow { height: 21px; border-bottom: 1px solid #cbc3a3; }
.vscroll .arrow:last-child { border-bottom: 0; border-top: 1px solid #cbc3a3; }
.hscroll .arrow { width: 21px; border-right: 1px solid #cbc3a3; }
.hscroll .arrow:last-child { border-left: 1px solid #cbc3a3; }
.thumb { display: grid; place-items: center; }
.thumb::after { content: ""; width: 4px; height: 4px; border: 1px solid #c4bb98; border-right-color: #fff; border-bottom-color: #fff; }
.vscroll .track { flex: 1; }
.vscroll .thumb { flex: 4; border: 1px solid #cbc3a3; border-width: 1px 0; background: linear-gradient(90deg, #fffdf3, #efe6c1); }
.vscroll .thumb.short { flex: 0 0 28px; border-top: 0; }
.vscroll .gap { height: 4px; }
.hscroll .thumb { flex: 73; border-right: 1px solid #cbc3a3; background: linear-gradient(#fffdf3, #efe6c1); }
.hscroll .track { flex: 25; }
.corner { border: 1px solid #cbc3a3; border-width: 1px 0 0 1px; background: #fffcf6; }
.tri { border: 4px solid transparent; }
.tri.up { border-bottom: 6px solid #8a8880; border-top: 0; }
.tri.down { border-top: 6px solid #8a8880; border-bottom: 0; }
.tri.left { border-right: 6px solid #c9c5b4; border-left: 0; }
.tri.right { border-left: 6px solid #8a8880; border-right: 0; }
.tri.dim { border-bottom-color: #c9c5b4; }

.tabs { display: flex; gap: 1px; flex: none; padding: 2px 1px; }
.tab {
  display: flex; align-items: center; gap: 1px; width: 172px; height: 20px; padding: 0 1px;
  background: #b3b1b3; color: #333; border: 1px solid #b9b088;
}
.tab.active { background: #b4cfe6; }
.status { display: flex; gap: 5px; flex: none; height: 20px; border-bottom: 1px solid #dcd7c2; }
.status span { border: 1px solid #dcd6ba; padding: 3px; }
.status .hint { flex: 1; border-left: 0; padding-left: 5px; }
.status .off { color: #a39a6f; }
.taskbar {
  display: flex; align-items: center; flex: none; height: 28px; padding: 0 2px;
  background: #d5d2cd; color: #000; border-top: 1px solid #fff;
}
.start {
  display: flex; align-items: center; gap: 1px; width: 51px; height: 22px; padding-left: 1px;
  font-weight: bold; background: #d5d2cd;
  border: 1px solid; border-color: #fff #404040 #404040 #fff;
}
.quick { display: flex; gap: 7px; margin: 0 18px 0 8px; }
.task {
  display: flex; align-items: center; width: 159px; height: 22px; padding: 0 4px;
  background: repeating-conic-gradient(#fff 0 25%, #d9d7d3 0 50%) 0 0 / 2px 2px;
  border: 1px solid; border-color: #404040 #fff #fff #404040; font-weight: bold;
}
.task .redact { flex: 1; margin-left: 1px; }
.lang { margin-left: auto; margin-right: 9px; }
.tray {
  display: flex; align-items: center; height: 22px; padding: 0 8px 0 4px;
  border: 1px solid; border-color: #808080 #fff #fff #808080;
}
.tray b { margin-right: 5px; font-size: 13px; }
.tray .net { margin: 0 2px 0 12px; }
.tray time { margin-left: 8px; }

.dialog {
  position: absolute; left: 362px; top: 206px; width: 707px;
  display: flex; flex-direction: column;
  background: #fffcf6; border: 3px solid #ccc; border-top: 0;
  box-shadow: 1px 1px 0 #8c8c8c;
}
.dlg-title { display: flex; align-items: center; height: 22px; padding: 0 5px 0 2px; background: #ccc; color: #333; }
.dlg-title h2 { margin-left: 5px; font-size: 12px; }
.dlg-body { padding: 8px 9px 9px 8px; }
.dlg-body .period label:first-child { margin: 0 7px 0 0; }
h3 { color: #94690f; font-size: 12px; height: 15px; border-bottom: 1px solid #b5ad8a; }
.dlg-body > h3 { margin-top: 7px; }
.dlg-body > h3.last { margin-top: 8px; }
.checks { display: flex; gap: 8px; margin: 9px 0 10px; }
.chk { display: flex; align-items: center; gap: 3px; white-space: nowrap; }
input[type="checkbox"] {
  appearance: none; width: 13px; height: 13px; margin: 0; flex: none;
  border: 1px solid #928a66; border-radius: 3px; background: #fff;
}
input[type="checkbox"]:checked::before {
  content: ""; display: block; width: 4px; height: 7px; margin: 1px 0 0 4px;
  border: solid #333; border-width: 0 2px 2px 0; transform: rotate(40deg);
}
.columns { display: grid; grid-template-columns: 214px 20px 210px 30px 1fr; }
.columns .rowset { grid-column: 3; }
.swap { display: flex; flex-direction: column; align-items: center; gap: 3px; padding-top: 90px; }
.swap svg { width: 14px; height: 14px; }
.tools { display: flex; align-items: center; height: 24px; }
.box { height: 149px; overflow: hidden; background: #fff; border: 1px solid #b5ad8a; color: #000; }
.split { display: grid; grid-template-columns: 1fr 17px; }
.tree { min-width: 0; height: 147px; overflow: hidden; }
.head, .list th {
  height: 21px; padding: 0 4px; text-align: left; font-weight: normal; line-height: 20px; color: #54400a;
  background: linear-gradient(#fffdf8, #f6ecce); border-bottom: 1px solid #d5cdab;
}
.node { display: flex; align-items: center; height: 19px; padding-left: 7px; border-bottom: 1px solid #d0d0d0; }
.sub { padding-left: 42px; }
.minus { width: 9px; height: 9px; margin-right: 7px; border: 1px solid #a8a8a8; border-radius: 5px; background: linear-gradient(#888, #888) center / 5px 1px no-repeat; }
.cur .chk { gap: 1px; }
.cur span { padding: 3px 2px; background: #6998d0; color: #fff; }
.list { width: 100%; table-layout: fixed; border-spacing: 0; }
.list td { height: 19px; padding: 0 4px; white-space: nowrap; border-bottom: 1px solid #d0d0d0; }
.list th + th { border-left: 1px solid #c2ba96; }
.list td + td { border-left: 1px solid #c9d2dc; }
.list .kind { width: 60px; }
.list .cur td:first-child { background: #6998d0; color: #fff; }
.filters .mark { width: 21px; padding: 0; }
.filters td.mark { padding-left: 4px; }
.filters td input { display: block; }
.filters .name { width: 183px; }
.filters .cmp { width: 110px; }
.filters .cur td:first-child { background: none; }
.filters .cur td:nth-child(2) { background: #6998d0; color: #fff; }
.dlg-foot { display: flex; align-items: center; height: 25px; padding: 0 2px 0 8px; background: #f7f2df; border-top: 1px solid #b5ad8a; }
```

FILE: report.js
```javascript
const COLUMNS = 12;
const rows = [
  { type: "item cut", text: "Kaspersky Internet Security 2013 Russian Edition.\n2-Desktop 1 year Renewal Card" },
  { type: "org", start: 0, width: 178 },
  { type: "order", text: "Заказ покупателя ДМ000000002 от 08.02.2013 14:09:15" },
  { type: "item", text: "ESET NOD32 Smart Security - лицензия на 2 года на 1ПК" },
  { type: "org", start: 4, width: 160 },
  { type: "order", text: "Заказ покупателя ДМ000000006 от 15.03.2012 17:46:08" },
  { type: "item", text: "Kaspersky Internet Security 2012 Russian Edition.\n2-Desktop 1 year Base DVD box" },
  { type: "org", start: 2, width: 198 },
  { type: "order", text: "Заказ покупателя ДМ000000001 от 11.01.2012 14:42:31" },
  { type: "item", text: "WinRmtDsktpSrvcsCAL 2008 RUS OLP NL DvcCAL" },
  { type: "item", text: "WinSvrCAL 2008 RUS OLP NL DvcCAL" },
  { type: "item", text: "WinSvrStd 2008R2 RUS OLP NL" },
  { type: "org", start: 3, width: 237, values: { 9: "1 801,82", 10: "1 801,82" } },
  { type: "order", text: "Заказ покупателя ДМ000000007 от 13.03.2013 17:16:16", values: { 9: "1 801,82", 10: "1 801,82" } },
  { type: "item", text: "Kaspersky Internet Security 2013 Russian Edition.\n5-Desktop 1 year Renewal Card" },
  { type: "org", start: 1, width: 58 },
  { type: "order", text: "Заказ покупателя ДМ000000020 от 20.12.2011 18:28:52" },
  { type: "item", text: "WinRmtDsktpSrvcsCAL 2008 RUS OLP NL DvcCAL" },
  { type: "item", text: "WinSvrCAL 2008 RUS OLP NL DvcCAL" },
  { type: "item", text: "WinSvrStd 2008R2 RUS OLP NL" },
  { type: "org", start: 2, width: 192 },
  { type: "order", text: "Заказ покупателя ДМ000000019 от 09.12.2011 17:17:26" },
  { type: "item", text: "Kaspersky Anti-Virus for File Server Russian Edition.\n1-FileServer 1 year Base License Pack" },
  { type: "org", start: 0, width: 115 },
  { type: "order", text: "Заказ покупателя ДМ000000005 от 20.02.2012 14:02:36" },
  { type: "item", text: "ESET NOD32 Smart Security Business Edition renewal for 6\nuser", values: { 3: "5 609\n1", 5: "5 609\n1" } }
];

const body = document.getElementById("rows");
for (const row of rows) {
  const tr = body.insertRow();
  tr.className = row.type;
  const label = document.createElement("div");
  label.className = "label";
  if (row.text) {
    label.innerText = row.text;
  } else {
    const bar = document.createElement("span");
    bar.className = "redact";
    bar.style.width = row.width + "px";
    bar.style.marginLeft = row.start + "px";
    label.append(bar);
  }
  tr.insertCell().append(label);
  for (let i = 0; i < COLUMNS; i++) {
    tr.insertCell().innerText = (row.values && row.values[i]) || "";
  }
}
```
